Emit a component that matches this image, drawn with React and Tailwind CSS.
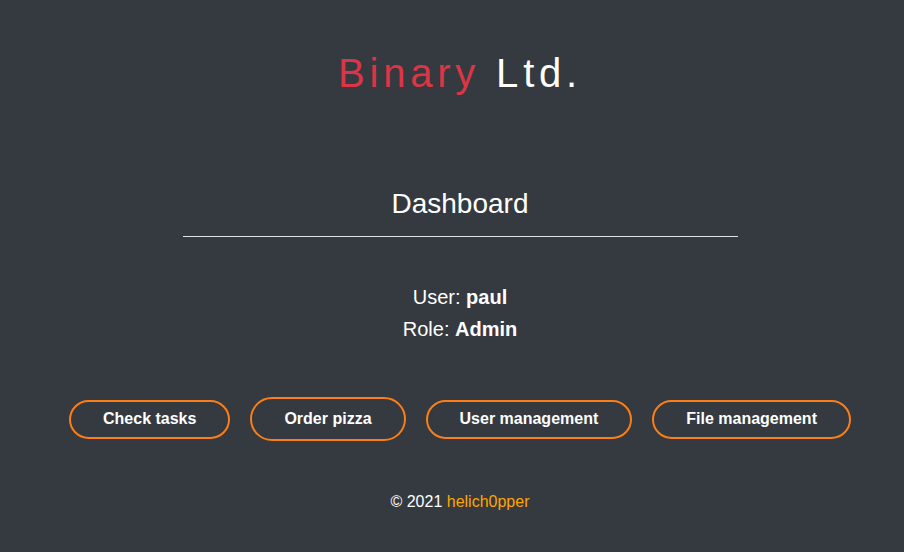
import React from 'react'

const buttons = [
  { label: 'Check tasks', h: 'h-[39px]' },
  { label: 'Order pizza', h: 'h-[44px]' },
  { label: 'User management', h: 'h-[39px]' },
  { label: 'File management', h: 'h-[39px]' },
]

export default function App() {
  return (
    <div className="min-h-screen bg-[#343a40] text-white pl-4 flex flex-col items-center font-['Liberation_Sans',Arial,sans-serif]">
      {/* Brand */}
      <h1 className="mt-[49px] text-[40px] leading-[48px] tracking-[4.8px] font-normal">
        <span className="text-[#dc3545]">Binary</span> <span className="text-white">Ltd.</span>
      </h1>

      {/* Heading */}
      <h2 className="mt-[90px] text-[28px] leading-[34px] font-normal">Dashboard</h2>
      <div className="mt-[15px] w-[555px] h-px bg-[#dee2e6]" />

      {/* User info */}
      <div className="mt-[44px] text-[20px] leading-[32px] text-center">
        <p>User: <b>paul</b></p>
        <p>Role: <b>Admin</b></p>
      </div>

      {/* Actions */}
      <div className="mt-[52px] flex items-center gap-5">
        {buttons.map(b => (
          <button
            key={b.label}
            className={`${b.h} px-8 rounded-full border-2 border-[#fd7e14] bg-transparent text-white font-bold text-base leading-6`}
          >
            {b.label}
          </button>
        ))}
      </div>

      {/* Footer */}
      <footer className="mt-[49px] text-base leading-6">
        © 2021 <a href="#" className="text-[#ffa500]">helich0pper</a>
      </footer>
    </div>
  )
}
